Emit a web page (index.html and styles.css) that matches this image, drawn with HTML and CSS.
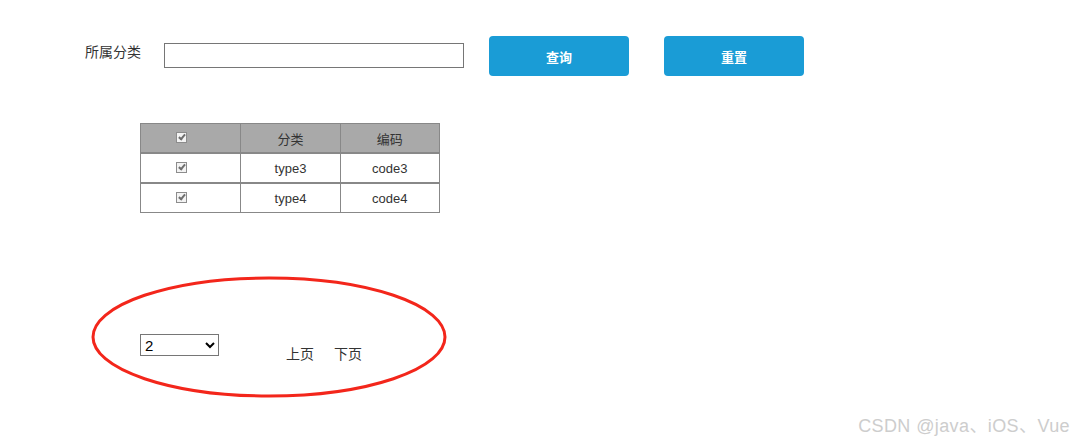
FILE: index.html
```html
<!DOCTYPE html>
<html lang="zh-CN">

<head>
    <meta charset="UTF-8">
    <meta name="viewport" content="width=device-width, initial-scale=1.0">
    <title>分类列表</title>
    <link rel="stylesheet" href="styles.css">
</head>

<body>
    <div class="search">
        <label class="search-label" for="category">所属分类</label>
        <input type="text" id="category" class="search-input">
        <button class="btn">查询</button>
        <button class="btn btn-reset">重置</button>
    </div>

    <table class="list">
        <thead>
            <tr>
                <th><input type="checkbox" checked disabled></th>
                <th>分类</th>
                <th>编码</th>
            </tr>
        </thead>
        <tbody>
            <tr>
                <td><input type="checkbox" checked disabled></td>
                <td>type3</td>
                <td>code3</td>
            </tr>
            <tr>
                <td><input type="checkbox" checked disabled></td>
                <td>type4</td>
                <td>code4</td>
            </tr>
        </tbody>
    </table>

    <div class="pager">
        <select class="page-size">
            <option>2</option>
            <option>5</option>
            <option>10</option>
        </select>
        <a class="page-link page-prev">上页</a>
        <a class="page-link">下页</a>
    </div>

    <svg class="mark" width="360" height="124" viewBox="0 0 360 124">
        <ellipse cx="178" cy="61" rx="176" ry="59" fill="none" stroke="#f3261b" stroke-width="3" />
    </svg>

    <div class="watermark">CSDN @java、iOS、Vue</div>
</body>

</html>
```

FILE: styles.css
```css
body {
    font-family: "Liberation Sans", "Noto Sans CJK SC", sans-serif;
    font-size: 13px;
    color: #333;
    margin: 0;
    padding: 0;
    background: white;
    position: relative;
    height: 444px;
    overflow: hidden;
}

.search {
    display: flex;
    align-items: flex-start;
    padding: 36px 0 0 85px;
}

.search-label {
    width: 79px;
    font-size: 14px;
    line-height: 18px;
    margin-top: 7px;
}

.search-input {
    box-sizing: border-box;
    width: 300px;
    height: 25px;
    margin: 7px 0 0 0;
    border: 1px solid #767676;
    padding: 0 4px;
}

.btn {
    width: 140px;
    height: 40px;
    margin-left: 25px;
    background-color: #1a9cd6;
    color: white;
    border: none;
    border-radius: 4px;
    font-family: "Noto Sans CJK SC", sans-serif;
    font-size: 13px;
    font-weight: bold;
    padding: 0;
    cursor: pointer;
}

.btn-reset {
    margin-left: 35px;
}

.list {
    box-sizing: border-box;
    margin: 47px 0 0 140px;
    width: 300px;
    table-layout: fixed;
    border-collapse: separate;
    border-spacing: 0;
    border: 1px solid #888;
}

.list th,
.list td {
    box-sizing: border-box;
    height: 30px;
    padding: 0;
    border-left: 1px solid #888;
    border-bottom: 2px solid #888;
    text-align: center;
    font-weight: normal;
    vertical-align: middle;
}

.list th:first-child,
.list td:first-child {
    border-left: none;
}

.list tbody tr:last-child td {
    height: 28px;
    border-bottom: none;
}

.list th {
    background-color: #a9a9a9;
}

.list input[type="checkbox"] {
    appearance: none;
    box-sizing: border-box;
    width: 11px;
    height: 11px;
    margin: 0 18px 0 0;
    border: 1px solid #8c8c8c;
    background: #f3f3f3;
    vertical-align: middle;
    position: relative;
    top: -2px;
}

.list input[type="checkbox"]::after {
    content: "";
    position: absolute;
    left: 3px;
    top: 0;
    width: 2px;
    height: 5px;
    border: solid #6e6e6e;
    border-width: 0 2px 2px 0;
    transform: rotate(40deg);
}

.pager {
    display: flex;
    align-items: flex-start;
    margin-top: 121px;
    padding-left: 140px;
}

.page-size {
    width: 79px;
    height: 22px;
    font-size: 15px;
    border: 1px solid #767676;
    background: white;
    color: black;
}

.page-link {
    margin-top: 12px;
    margin-left: 20px;
    font-size: 14px;
    line-height: 17px;
    color: #333;
    cursor: pointer;
}

.page-prev {
    margin-left: 67px;
}

.mark {
    position: absolute;
    left: 91px;
    top: 276px;
}

.watermark {
    position: absolute;
    right: 8px;
    top: 415px;
    font-size: 18px;
    line-height: 22px;
    color: #cdcdcd;
    letter-spacing: 0.4px;
}
```
